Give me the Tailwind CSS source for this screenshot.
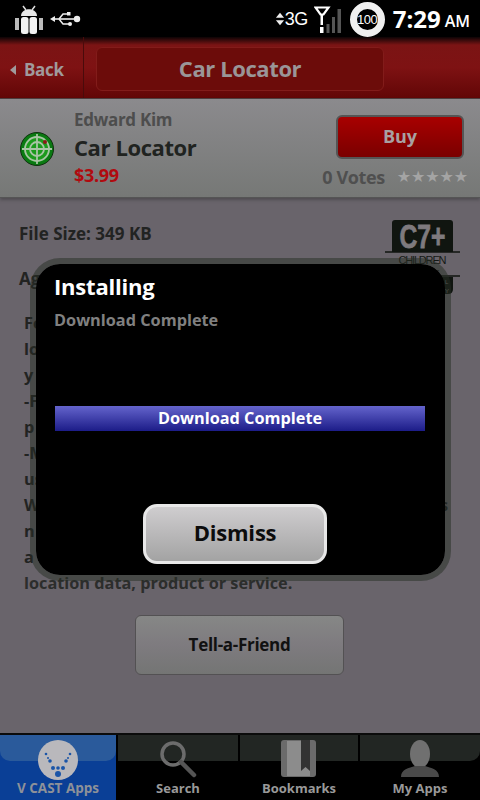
<!DOCTYPE html>
<html><head><meta charset="utf-8"><script src="https://cdn.jsdelivr.net/npm/@tailwindcss/browser@4"></script></head>
<body class="m-0">
<div class="relative w-[480px] h-[800px] overflow-hidden flex flex-col bg-[#69646b] font-['Open_Sans',sans-serif] font-bold">
  <!-- status bar -->
  <div class="h-[37px] shrink-0 bg-black flex items-center pl-[14px] pr-[10px] text-white">
    <svg width="30" height="30" viewBox="0 0 30 30" class="mt-[1px]">
      <path d="M9 2l3 4M21 2l-3 4" stroke="#ddd" stroke-width="1.5"/>
      <path d="M7 12c0-9 16-9 16 0z" fill="#e8e8e8"/>
      <rect x="7" y="13" width="7.5" height="17" rx="2.5" fill="#f2f2f2"/><rect x="15.5" y="13" width="7.5" height="17" rx="2.5" fill="#f2f2f2"/>
      <path d="M1 14h4v12H1zM25 14h4v12h-4z" fill="#bbb"/>
    </svg>
    <svg width="32" height="16" viewBox="0 0 32 16" class="ml-[6px]" fill="#eee">
      <path d="M0 8l5-3v6z"/><path d="M4 7.2h23v1.6H4z"/><circle cx="27" cy="8" r="3.2"/>
      <path d="M9 8l4-5h5M9 8l4 5h6" fill="none" stroke="#eee" stroke-width="1.5"/>
      <rect x="17" y="1" width="3.5" height="3.5"/><circle cx="20" cy="13" r="2"/>
    </svg>
    <svg width="10" height="14" viewBox="0 0 11 14" class="ml-auto" fill="#eee"><path d="M5.500 0l4.500 5.500H1zM5.500 14L1 8.500h9z"/></svg>
    <span class="text-[18px] font-normal leading-none tracking-[-0.6px] font-['Liberation_Sans',sans-serif]">3G</span>
    <svg width="28" height="28" viewBox="0 0 28 28" class="ml-[6px] mt-[2px]">
      <path d="M1.500 1.500h13l-5 7h-3z" fill="none" stroke="#fff" stroke-width="2.200"/><path d="M6.500 8h2.500v11H6.500z" fill="#fff"/>
      <rect x="6" y="21" width="3.500" height="6" fill="#fff"/>
      <rect x="12.500" y="18" width="3" height="9" fill="#555"/><rect x="18" y="11" width="3" height="16" fill="#555"/><rect x="23.500" y="3" width="3.500" height="24" fill="#555"/>
    </svg>
    <div class="ml-[8px] mt-[2px] w-[35px] h-[35px] rounded-full border-[7px] border-[#f0f0f0] flex items-center justify-center"><span class="text-[13px] font-normal tracking-[-0.4px] font-['Liberation_Sans',sans-serif]">100</span></div>
    <span class="ml-[8px] text-[24px] leading-none">7:29</span>
    <span class="ml-[4px] text-[16px] leading-none mt-[4px] font-semibold">AM</span>
  </div>
  <!-- header -->
  <div class="h-[62px] shrink-0 bg-[linear-gradient(#0c0405_0,#7b1414_8px,#7e1213_50%,#620606_100%)] border-b border-[#4d3b3d] flex items-stretch">
    <div class="w-[84px] border-r border-[#4a0b0b] flex items-center pl-[10px] pt-[4px] text-[#a09a9c] text-[17px] gap-[8px] tracking-[-0.3px]">
      <svg width="6" height="10" viewBox="0 0 6 10" fill="#a09a9c"><path d="M6 0v10L0 5z"/></svg>
      <span>Back</span>
    </div>
    <div class="flex-1 pt-[10px] pb-[7px] pl-[12px] pr-[96px] flex">
      <div class="flex-1 rounded-[6px] bg-[#6c0c0a] border border-[#821c1a] flex items-center justify-center text-[#9a9597] text-[22px] tracking-[-0.4px] pb-[2px]">Car Locator</div>
    </div>
  </div>
  <!-- app card -->
  <div class="h-[99px] shrink-0 bg-[linear-gradient(#8b8a8d,#767876)] border-b border-[#555] shadow-[0_2px_3px_#4f4c51] flex items-center pl-[20px] pr-[12px] relative">
    <svg width="34" height="34" viewBox="0 0 34 34" class="shrink-0 mt-[1px]">
      <circle cx="17" cy="17" r="16.500" fill="#0a7a12" stroke="#10300f"/>
      <circle cx="17" cy="17" r="13" fill="#1c9a1c"/>
      <g fill="none" stroke="#a9c4a5" stroke-width="1.800"><circle cx="17" cy="17" r="12"/><circle cx="17" cy="17" r="7"/><path d="M17 2v30M2 17h30"/></g>
      <circle cx="25" cy="10" r="2" fill="#8c1818"/>
    </svg>
    <div class="ml-[20px] flex flex-col">
      <span class="text-[17px] leading-[24px] text-[#4d4d4d] mt-[-1px] tracking-[-0.3px]">Edward Kim</span>
      <span class="text-[22px] leading-[30px] text-[#202320] tracking-[-0.4px]">Car Locator</span>
      <span class="text-[18px] leading-[26px] text-[#b00a0f] tracking-[-0.3px]">$3.99</span>
    </div>
    <div class="ml-auto flex flex-col items-end mt-[7px]">
      <div class="w-[128px] h-[44px] mr-[4px] rounded-[6px] border-2 border-[#555] bg-[linear-gradient(#a80000,#7a0000)] flex items-center justify-center text-[#a8a0a2] text-[18px] pb-[1px]">Buy</div>
      <div class="flex items-center mt-[5px] mb-[-2px]">
        <span class="text-[18px] text-[#4f4f4f] leading-[26px] tracking-[-0.4px]">0 Votes</span>
        <span class="ml-[12px] text-[16px] leading-none text-[#a4a4a4] tracking-[-0.1px] font-['DejaVu_Sans',sans-serif]">★★★★★</span>
      </div>
    </div>
  </div>
  <!-- content -->
  <div class="flex-1 min-h-0 relative text-[#222322]">
    <div class="flex justify-between pl-[19px] pr-[20px] pt-[22px]">
      <div class="text-[17px] leading-[26px]">
        <div class="mt-[1px]">File Size: 349 KB</div>
        <div class="mt-[19px]">Ag</div>
      </div>
      <svg width="75" height="76" viewBox="0 0 75 76" class="shrink-0">
        <path d="M7 3q0-3 3-3h55q3 0 3 3v29H7z" fill="#101510"/>
        <path d="M0 32h75M0 56h75" stroke="#101510" stroke-width="1.300"/>
        <text x="37.500" y="28" text-anchor="middle" fill="#7e7a7e" font-family="Liberation Sans" font-weight="700" font-size="33" stroke="#7e7a7e" stroke-width="0.800" textLength="46" lengthAdjust="spacingAndGlyphs">C7+</text>
        <text x="37.500" y="44" text-anchor="middle" fill="#141814" font-family="Liberation Sans" font-weight="400" font-size="11" textLength="48">CHILDREN</text>
        <text x="50" y="55" fill="#141814" font-family="Liberation Sans" font-weight="400" font-size="7">S</text>
        <path d="M54 57h14v12q0 5-5 5h-9z" fill="#101510"/>
        <text x="60" y="64" fill="#7e7a7e" font-family="Liberation Sans" font-weight="400" font-size="6">L</text>
        <text x="60" y="73" fill="#7e7a7e" font-family="Liberation Sans" font-weight="400" font-size="6">Y</text>
      </svg>
    </div>
    <div class="absolute left-[24px] top-[112px] w-[424px] text-[16.300px] leading-[26px]">
      <div>Fo</div><div>lo</div><div>y</div><div>-F</div><div>p</div><div>-M</div><div>us</div>
      <div class="flex justify-between"><span>W</span><span>s</span></div>
      <div>n</div><div>a</div>
      <div class="text-[#2c2d2c]">location data, product or service.</div>
    </div>
    <div class="absolute left-[135px] top-[417px] w-[209px] h-[60px] rounded-[6px] border border-[#535153] bg-[linear-gradient(#868786,#7e7b7f_50%,#747574)] flex items-center justify-center text-[#111] text-[17px] tracking-[-0.3px]">Tell-a-Friend</div>
  </div>
  <!-- tab bar -->
  <div class="h-[67px] shrink-0 bg-black border-t-2 border-[#0b0b0b] grid grid-cols-[116px_120px_118px_1fr] gap-x-[2px] text-[#999] text-[13px] relative">
    <div class="relative bg-[#0a3f96] flex flex-col items-center justify-end pb-[1px] text-[#8d9199] overflow-hidden text-[13.500px]">
      <div class="absolute left-0 right-0 top-0 h-[26px] bg-[#2a5a9b] rounded-b-[10px]"></div>
      <svg width="40" height="40" viewBox="0 0 40 40" class="absolute left-[38px] top-[5px]">
        <circle cx="20" cy="20" r="20" fill="#b9b8bc"/>
        <g fill="#1b55a8"><circle cx="20" cy="34" r="3"/><circle cx="15" cy="28" r="2"/><circle cx="25" cy="28" r="2"/><circle cx="20" cy="28" r="1.800"/><circle cx="12" cy="21" r="1.800"/><circle cx="28" cy="21" r="1.800"/><circle cx="8" cy="14" r="1.300"/><circle cx="32" cy="14" r="1.300"/><circle cx="10" cy="18" r="1"/><circle cx="30" cy="18" r="1"/></g>
      </svg>
      <span class="relative leading-[22px]">V CAST Apps</span>
    </div>
    <div class="relative flex flex-col items-center justify-end pb-[1px]">
      <div class="absolute left-0 right-0 top-0 h-[26px] bg-[#222623]"></div>
      <svg width="38" height="38" viewBox="0 0 38 38" class="absolute left-[41px] top-[5px]"><circle cx="14" cy="14" r="11" fill="none" stroke="#6c6c6c" stroke-width="3.500"/><path d="M22 22l13 13" stroke="#555" stroke-width="4.500" stroke-linecap="round"/></svg>
      <span class="relative leading-[22px]">Search</span>
    </div>
    <div class="relative flex flex-col items-center justify-end pb-[1px]">
      <div class="absolute left-0 right-0 top-0 h-[26px] bg-[#222623]"></div>
      <svg width="35" height="38" viewBox="0 0 35 38" class="absolute left-[41px] top-[5px]"><rect width="35" height="37" rx="3" fill="#6b6b6b"/><rect x="6" y="1" width="23" height="35" fill="#8c8c8c"/><path d="M20 0h9v31l-4.500-4-4.500 4z" fill="#333"/></svg>
      <span class="relative leading-[22px]">Bookmarks</span>
    </div>
    <div class="relative flex flex-col items-center justify-end pb-[1px]">
      <div class="absolute left-0 right-0 top-0 h-[26px] bg-[#222623] rounded-br-[10px]"></div>
      <svg width="38" height="38" viewBox="0 0 38 38" class="absolute left-[41px] top-[5px]"><ellipse cx="19" cy="14" rx="10" ry="14" fill="#707070"/><path d="M0 37c0-8 8-9 14-11h10c6 2 14 3 14 11z" fill="#4a4a4a"/></svg>
      <span class="relative leading-[22px]">My Apps</span>
    </div>
  </div>
  <!-- modal -->
  <div class="absolute left-[30px] top-[258px] w-[421px] h-[323px] rounded-[30px] border-[6px] border-[#252e23]/50 bg-black bg-clip-padding px-[18px] flex flex-col">
    <div class="text-white text-[22px] leading-[30px] mt-[7px] tracking-[-0.2px]">Installing</div>
    <div class="text-[#808080] text-[16.300px] leading-[26px] mt-[6px]">Download Complete</div>
    <div class="mt-[73px] h-[25px] w-[370px] ml-[1px] bg-[linear-gradient(#6464cc,#1c1c88)] flex items-center justify-center text-white text-[16.300px]">Download Complete</div>
    <div class="mt-[73px] ml-[89px] w-[184px] h-[60px] rounded-[14px] border-[3px] border-[#e8e8e8] bg-[linear-gradient(#cfcdcf,#a3a3a3)] flex items-center justify-center text-[#0c0c0c] text-[22px] tracking-[-0.2px] pb-[3px]">Dismiss</div>
  </div>
</div>
</body></html>
